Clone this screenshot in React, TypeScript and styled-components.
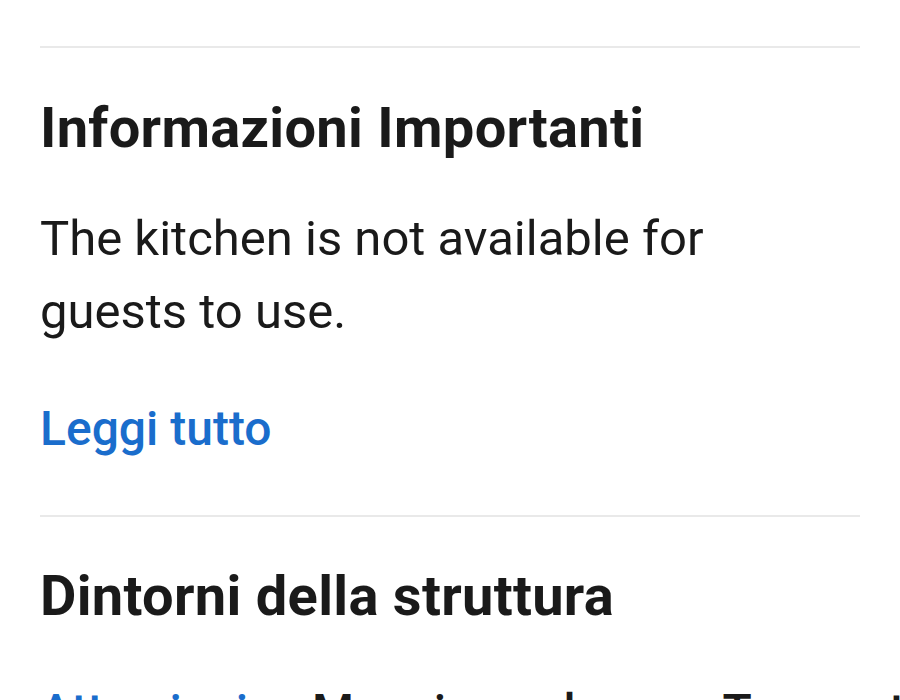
import React from "react";
import styled, { createGlobalStyle } from "styled-components";

const Global = createGlobalStyle`
  html, body { margin: 0; padding: 0; background: #ffffff; }
  body { font-family: Roboto, "Noto Sans", "Liberation Sans", sans-serif; color: #1a1a1a; overflow: hidden; }
`;

const Page = styled.div`
  padding: 46px 40px 0;
  display: flex;
  flex-direction: column;
`;

const Divider = styled.hr<{ $mb: number }>`
  border: none;
  height: 2px;
  background: #e9e9e9;
  margin: 0 0 ${(p) => p.$mb}px;
`;

const Heading = styled.h2`
  margin: 0;
  font-size: 56px;
  line-height: 66px;
  font-weight: 700;
  letter-spacing: 0.3px;
  color: #1a1a1a;
`;

const Body = styled.p`
  margin: 41px 0 0;
  font-size: 49px;
  line-height: 73px;
  font-weight: 400;
  color: #1a1a1a;
  max-width: 700px;
`;

const Link = styled.a`
  display: block;
  margin: 44px 0 50px;
  font-size: 48px;
  line-height: 73px;
  font-weight: 500;
  color: #1a6dcc;
  text-decoration: none;
`;

const Tabs = styled.div`
  display: flex;
  margin-top: 53px;
  gap: 64px;
  white-space: nowrap;
`;

const Tab = styled.span<{ $active?: boolean }>`
  font-size: 48px;
  line-height: 60px;
  font-weight: 500;
  color: ${(p) => (p.$active ? "#1a6dcc" : "#1a1a1a")};
`;

export default function App() {
  return (
    <>
      <Global />
      <Page>
        <Divider $mb={47} />
        <Heading>Informazioni Importanti</Heading>
        <Body>The kitchen is not available for guests to use.</Body>
        <Link href="#">Leggi tutto</Link>
        <Divider $mb={46} />
        <Heading>Dintorni della struttura</Heading>
        <Tabs>
          <Tab $active>Attrazioni</Tab>
          <Tab>Mangiare e bere</Tab>
          <Tab>Trasporti</Tab>
        </Tabs>
      </Page>
    </>
  );
}
